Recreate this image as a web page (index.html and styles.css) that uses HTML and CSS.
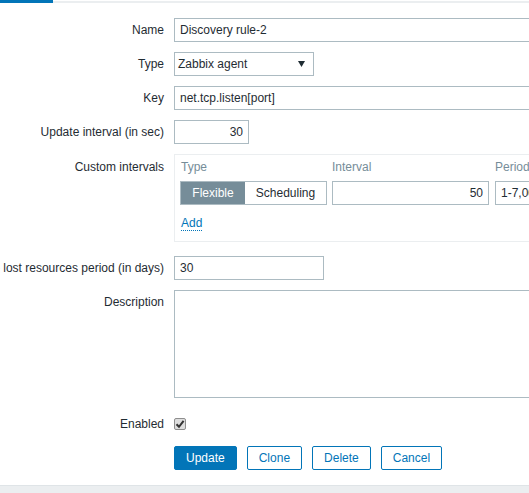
FILE: index.html
```html
<!DOCTYPE html>
<html>
<head>
<meta charset="utf-8">
<link rel="stylesheet" href="styles.css">
</head>
<body>
<div class="tabs"><div class="tab-active"></div><div class="tab-rest"></div></div>
<div class="form">
  <div class="row">
    <div class="label"><span>Name</span></div>
    <div class="field"><div class="input wide">Discovery rule-2</div></div>
  </div>
  <div class="row">
    <div class="label"><span>Type</span></div>
    <div class="field">
      <div class="input select"><span>Zabbix agent</span>
        <svg class="arrow" width="7" height="6" viewBox="0 0 7 6"><path d="M0 0H7L3.5 6Z" fill="#1f2c33"/></svg>
      </div>
    </div>
  </div>
  <div class="row">
    <div class="label"><span>Key</span></div>
    <div class="field"><div class="input wide">net.tcp.listen[port]</div></div>
  </div>
  <div class="row">
    <div class="label"><span>Update interval (in sec)</span></div>
    <div class="field"><div class="input small right">30</div></div>
  </div>
  <div class="row row-custom">
    <div class="label label-top custom-label"><span>Custom intervals</span></div>
    <div class="field">
      <div class="custom-box">
        <div class="ci-head">
          <div class="col-type">Type</div>
          <div class="col-interval">Interval</div>
          <div class="col-period">Period</div>
        </div>
        <div class="ci-row">
          <div class="col-type">
            <div class="seg">
              <div class="seg-btn seg-on">Flexible</div>
              <div class="seg-btn">Scheduling</div>
            </div>
          </div>
          <div class="col-interval"><div class="input right interval">50</div></div>
          <div class="col-period"><div class="input period">1-7,00:00-24:00</div></div>
        </div>
        <div class="ci-add"><span class="link">Add</span></div>
      </div>
    </div>
  </div>
  <div class="row">
    <div class="label"><span>Keep lost resources period (in days)</span></div>
    <div class="field"><div class="input medium">30</div></div>
  </div>
  <div class="row">
    <div class="label label-top desc-label"><span>Description</span></div>
    <div class="field"><div class="textarea"></div></div>
  </div>
  <div class="row row-enabled">
    <div class="label"><span>Enabled</span></div>
    <div class="field">
      <div class="checkbox">
        <svg width="10" height="10" viewBox="0 0 10 10"><path d="M1.5 5.2L4 7.8L8.6 1.8" fill="none" stroke="#333" stroke-width="2"/></svg>
      </div>
    </div>
  </div>
  <div class="row row-buttons">
    <div class="label"></div>
    <div class="field buttons">
      <div class="btn btn-primary">Update</div>
      <div class="btn">Clone</div>
      <div class="btn">Delete</div>
      <div class="btn">Cancel</div>
    </div>
  </div>
</div>
<div class="footer"></div>
</body>
</html>
```

FILE: styles.css
```css
html, body {
  margin: 0;
  padding: 0;
  overflow: hidden;
  background: #ffffff;
}
body {
  font-family: "Liberation Sans", Arial, sans-serif;
  font-size: 12px;
  color: #1f2c33;
  width: 529px;
  height: 493px;
}
.tabs {
  display: flex;
  height: 3px;
}
.tab-active {
  width: 53px;
  background: #0275b8;
}
.tab-rest {
  flex: 1;
  margin-top: 1px;
  height: 2px;
  background: #ebeef0;
}
.form {
  padding-top: 15px;
  display: flex;
  flex-direction: column;
  gap: 10px;
}
.row {
  display: flex;
  column-gap: 10px;
}
.label {
  width: 164px;
  flex: none;
  display: flex;
  justify-content: flex-end;
  white-space: nowrap;
  line-height: 24px;
  height: 24px;
}
.label-top {
  line-height: 14px;
  height: auto;
}
.custom-label { padding-top: 6px; }
.desc-label { padding-top: 5px; }
.field {
  flex: none;
  display: flex;
  align-items: flex-start;
}
.input {
  box-sizing: border-box;
  height: 24px;
  line-height: 22px;
  border: 1px solid #acbbc2;
  padding: 0 5px;
  white-space: nowrap;
  overflow: hidden;
  background: #fff;
}
.wide { width: 453px; }
.small { width: 75px; }
.medium { width: 150px; }
.right { text-align: right; }
.select {
  width: 140px;
  display: flex;
  align-items: center;
  justify-content: space-between;
  padding: 0 8px 0 3px;
}
.arrow { display: block; }
.row-custom { margin-bottom: 4px; }
.custom-box {
  box-sizing: border-box;
  width: 453px;
  height: 88px;
  border: 1px solid #ebeef0;
  padding: 5px 0 0 5px;
}
.ci-head, .ci-row {
  display: flex;
}
.ci-head {
  color: #768d99;
  line-height: 14px;
  height: 14px;
  margin-bottom: 7px;
}
.col-type { width: 152px; flex: none; padding-left: 0; }
.ci-head .col-type { padding-left: 1px; width: 151px; }
.col-interval { width: 163px; flex: none; }
.col-period { flex: none; }
.seg {
  display: flex;
  border: 1px solid #acbbc2;
  height: 24px;
  box-sizing: border-box;
  width: 147px;
}
.seg-btn {
  line-height: 22px;
  text-align: center;
  width: 81px;
}
.seg-on {
  width: 64px;
  background: #768d99;
  color: #fff;
}
.interval { width: 157px; }
.period { width: 150px; }
.ci-add {
  margin-top: 11px;
  line-height: 14px;
  padding-left: 1px;
}
.link {
  color: #0275b8;
  border-bottom: 1px dotted #0275b8;
}
.textarea {
  box-sizing: border-box;
  width: 453px;
  height: 108px;
  border: 1px solid #acbbc2;
}
.row-enabled { margin-top: 4px; }
.checkbox {
  box-sizing: border-box;
  width: 12px;
  height: 12px;
  margin-top: 6px;
  border: 1px solid #8e8e8e;
  border-radius: 2px;
  background: #dedede;
  display: flex;
  align-items: center;
  justify-content: center;
}
.checkbox svg { display: block; }
.buttons {
  display: flex;
  gap: 10px;
}
.btn {
  box-sizing: border-box;
  height: 24px;
  line-height: 22px;
  padding: 0 11px;
  border: 1px solid #0275b8;
  border-radius: 2px;
  color: #0275b8;
  background: #fff;
}
.btn-primary {
  background: #0275b8;
  color: #fff;
}
.footer {
  margin-top: 15px;
  height: 8px;
  background: #ebeef0;
  border-top: 1px solid #dfe4e7;
}
```
